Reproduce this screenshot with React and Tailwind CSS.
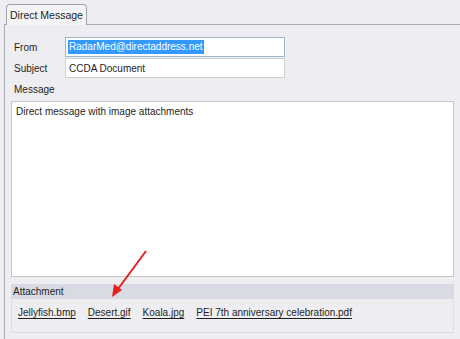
export default function App() {
  const files = [
    "Jellyfish.bmp",
    "Desert.gif",
    "Koala.jpg",
    "PEI 7th anniversary celebration.pdf",
  ];

  return (
    <div
      className="relative w-[460px] h-[339px] overflow-hidden bg-[#eeeef2] pt-[4px] pl-[4px] text-[10px] text-[#1e1e1e]"
      style={{ fontFamily: '"Liberation Sans", Arial, sans-serif' }}
    >
      {/* tab strip */}
      <div className="flex pl-[2px]">
        <div className="relative z-10 -mb-px h-[21px] rounded-t-[4px] border border-b-0 border-[#9ea3ab] bg-[#f4f4f7] px-[3px] pt-[5px] text-[10.5px] leading-none">
          Direct Message
        </div>
      </div>

      {/* panel */}
      <div className="h-[400px] border-l border-t border-[#a9adb4] pl-[6px] pt-[12px]">
        <div className="flex flex-col gap-[1px] pl-[3px]">
          <div className="flex items-center">
            <span className="w-[51px]">From</span>
            <div className="flex h-[20px] w-[220px] items-center border border-[#9fb6cf] bg-white px-[2px]">
              <span className="bg-[#3399ff] px-px leading-[14px] text-white">
                RadarMed@directaddress.net
              </span>
            </div>
          </div>
          <div className="flex items-center">
            <span className="w-[51px]">Subject</span>
            <div className="flex h-[20px] w-[220px] items-center border border-[#d0d0d3] bg-white px-[3px]">
              CCDA Document
            </div>
          </div>
        </div>

        <div className="mt-[5px] pl-[3px] leading-[13px]">Message</div>

        <div className="mt-[5px] h-[176px] w-[443px] border border-[#c6c6ca] bg-white px-[4px] pt-[2px]">
          Direct message with image attachments
        </div>

        <div className="mt-[7px] w-[443px]">
          <div className="h-[15px] bg-[#d9dbe4] pl-[2px] leading-[15px]">
            Attachment
          </div>
          <div className="flex h-[34px] gap-[12px] border border-t-0 border-[#dcdce2] pl-[6px] pt-[6px]">
            {files.map((f) => (
              <span key={f} className="underline underline-offset-[2px] text-[#1e1e1e]">
                {f}
              </span>
            ))}
          </div>
        </div>
      </div>

      {/* annotation arrow */}
      <svg
        className="absolute left-0 top-0 pointer-events-none"
        width="460"
        height="339"
      >
        <line x1="146" y1="251" x2="118" y2="289" stroke="#e8211f" strokeWidth="2" />
        <polygon points="112,297 114,284 122,290" fill="#e8211f" />
      </svg>
    </div>
  );
}
